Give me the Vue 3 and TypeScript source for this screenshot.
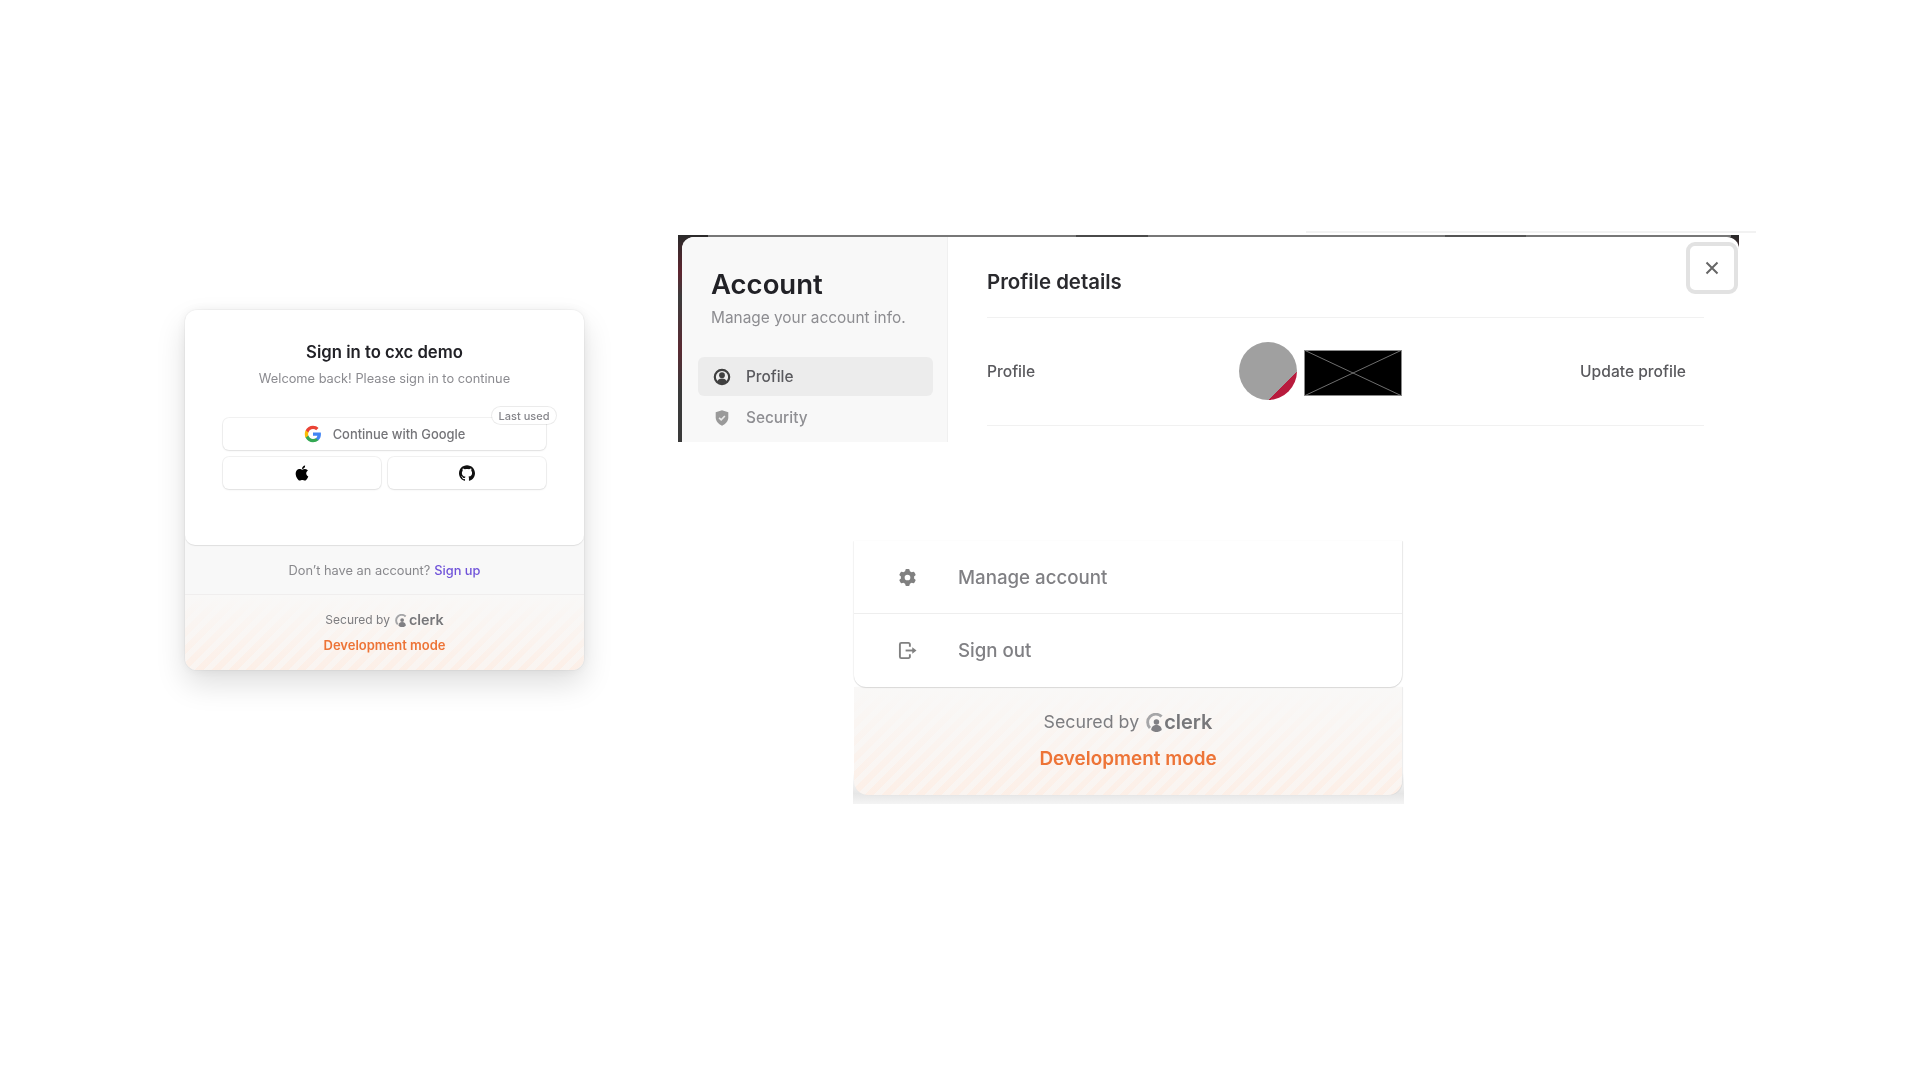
<template>
  <main class="page">
    <section class="signin">
      <div class="signin-body">
        <h1 class="signin-title">Sign in to cxc demo</h1>
        <p class="signin-sub">Welcome back! Please sign in to continue</p>
        <div class="providers">
          <button class="provider provider-wide">
            <svg class="google" viewBox="0 0 24 24" aria-hidden="true">
              <path fill="#4285F4" d="M22.56 12.25c0-.78-.07-1.53-.2-2.25H12v4.26h5.92c-.26 1.37-1.04 2.53-2.21 3.31v2.77h3.57c2.08-1.92 3.28-4.74 3.28-8.09z" />
              <path fill="#34A853" d="M12 23c2.97 0 5.46-.98 7.28-2.66l-3.57-2.77c-.98.66-2.23 1.06-3.71 1.06-2.86 0-5.29-1.93-6.16-4.53H2.18v2.84C3.99 20.53 7.7 23 12 23z" />
              <path fill="#FBBC05" d="M5.84 14.09c-.22-.66-.35-1.36-.35-2.09s.13-1.43.35-2.09V7.07H2.18C1.43 8.55 1 10.22 1 12s.43 3.45 1.18 4.93l2.85-2.22.81-.62z" />
              <path fill="#EA4335" d="M12 5.38c1.62 0 3.06.56 4.21 1.64l3.15-3.15C17.45 2.09 14.97 1 12 1 7.7 1 3.99 3.47 2.18 7.07l3.66 2.84c.87-2.6 3.3-4.53 6.16-4.53z" />
            </svg>
            <span>Continue with Google</span>
            <span class="last-used">Last used</span>
          </button>
          <button class="provider" aria-label="Apple">
            <svg class="apple" viewBox="0 0 24 24" aria-hidden="true">
              <path fill="#000" d="M17.05 20.28c-.98.95-2.05.8-3.08.35-1.09-.46-2.09-.48-3.24 0-1.44.62-2.2.44-3.06-.35C2.79 15.25 3.51 7.59 9.05 7.31c1.35.07 2.29.74 3.08.8 1.18-.24 2.31-.93 3.57-.84 1.51.12 2.65.72 3.4 1.8-3.12 1.87-2.38 5.98.48 7.13-.57 1.5-1.31 2.99-2.54 4.09zM12.03 7.25c-.15-2.23 1.66-4.07 3.74-4.25.29 2.58-2.34 4.5-3.74 4.25z" />
            </svg>
          </button>
          <button class="provider" aria-label="GitHub">
            <svg class="brand" viewBox="0 0 24 24" aria-hidden="true">
              <path fill="#111" d="M12 .297c-6.63 0-12 5.373-12 12 0 5.303 3.438 9.8 8.205 11.385.6.113.82-.258.82-.577 0-.285-.01-1.04-.015-2.04-3.338.724-4.042-1.61-4.042-1.61C4.422 18.07 3.633 17.7 3.633 17.7c-1.087-.744.084-.729.084-.729 1.205.084 1.838 1.236 1.838 1.236 1.07 1.835 2.809 1.305 3.495.998.108-.776.417-1.305.76-1.605-2.665-.3-5.466-1.332-5.466-5.93 0-1.31.465-2.38 1.235-3.22-.135-.303-.54-1.523.105-3.176 0 0 1.005-.322 3.3 1.23.96-.267 1.98-.399 3-.405 1.02.006 2.04.138 3 .405 2.28-1.552 3.285-1.23 3.285-1.23.645 1.653.24 2.873.12 3.176.765.84 1.23 1.91 1.23 3.22 0 4.61-2.805 5.625-5.475 5.92.42.36.81 1.096.81 2.22 0 1.606-.015 2.896-.015 3.286 0 .315.21.69.825.57C20.565 22.092 24 17.592 24 12.297c0-6.627-5.373-12-12-12" />
            </svg>
          </button>
        </div>
      </div>
      <div class="signup-row">
        Don’t have an account? <a class="signup-link">Sign up</a>
      </div>
      <footer class="dev-footer small">
        <div class="secured">
          <span>Secured by</span>
          <svg class="clerk-mark" viewBox="0 0 20 20" aria-hidden="true">
            <path class="clerk-arc" d="M16.4 3.8A8.4 8.4 0 0 0 4.2 15.9" />
            <circle cx="11" cy="9.4" r="2.9" />
            <path d="M5.4 18a8.6 8.6 0 0 0 11.2 0 5.4 5.4 0 0 0-11.2 0z" />
          </svg>
          <span class="clerk-word">clerk</span>
        </div>
        <div class="dev-mode">Development mode</div>
      </footer>
    </section>

    <div class="right">
      <section class="account">
        <div class="account-inner">
          <aside class="side">
            <h2 class="side-title">Account</h2>
            <p class="side-sub">Manage your account info.</p>
            <nav class="side-nav">
              <a class="side-item active">
                <svg class="side-icon" viewBox="0 0 20 20" aria-hidden="true">
                  <circle cx="10" cy="10" r="8" fill="none" stroke="#3f3f3f" stroke-width="2.4" />
                  <circle cx="10" cy="8" r="3.2" fill="#3f3f3f" />
                  <path fill="#3f3f3f" d="M4.4 15.4a6 6 0 0 1 11.2 0L10 18z" />
                </svg>
                <span>Profile</span>
              </a>
              <a class="side-item">
                <svg class="side-icon" viewBox="0 0 20 20" aria-hidden="true">
                  <path fill="#9a9a9a" d="M10 1.5 3 3.6v5.6c0 4.4 2.9 7.6 7 9.3 4.1-1.7 7-4.9 7-9.3V3.6z" />
                  <path fill="none" stroke="#e9e9e9" stroke-width="1.8" d="m6.8 9.8 2.3 2.3 4.1-4.4" />
                </svg>
                <span>Security</span>
              </a>
            </nav>
          </aside>
          <div class="details">
            <h2 class="details-title">Profile details</h2>
            <div class="details-row">
              <span class="row-label">Profile</span>
              <div class="avatar"></div>
              <svg class="broken" viewBox="0 0 98 46" preserveAspectRatio="none" aria-hidden="true">
                <rect x=".5" y=".5" width="97" height="45" fill="#000" stroke="#8a8a8a" />
                <path d="M0 0 98 46M98 0 0 46" stroke="#8a8a8a" stroke-width=".8" />
              </svg>
              <a class="update">Update profile</a>
            </div>
          </div>
        </div>
        <button class="close" aria-label="Close">
          <svg viewBox="0 0 16 16" aria-hidden="true">
            <path d="m2.5 2.5 11 11m0-11-11 11" fill="none" stroke="#666" stroke-width="2" />
          </svg>
        </button>
      </section>

      <section class="menu">
        <div class="menu-rows">
          <a class="menu-row">
            <svg class="menu-icon" viewBox="0 0 20 20" aria-hidden="true">
              <path fill="#808080" fill-rule="evenodd" d="M7.84 1.804A1 1 0 0 1 8.82 1h2.36a1 1 0 0 1 .98.804l.331 1.652a6.993 6.993 0 0 1 1.929 1.115l1.598-.54a1 1 0 0 1 1.186.447l1.18 2.044a1 1 0 0 1-.205 1.251l-1.267 1.113a7.047 7.047 0 0 1 0 2.228l1.267 1.113a1 1 0 0 1 .206 1.25l-1.18 2.045a1 1 0 0 1-1.187.447l-1.598-.54a6.993 6.993 0 0 1-1.929 1.115l-.33 1.652a1 1 0 0 1-.98.804H8.82a1 1 0 0 1-.98-.804l-.331-1.652a6.993 6.993 0 0 1-1.929-1.115l-1.598.54a1 1 0 0 1-1.186-.447l-1.18-2.044a1 1 0 0 1 .205-1.251l1.267-1.114a7.05 7.05 0 0 1 0-2.227L1.821 7.773a1 1 0 0 1-.206-1.25l1.18-2.045a1 1 0 0 1 1.187-.447l1.598.54A6.992 6.992 0 0 1 7.51 3.456l.33-1.652ZM10 13a3 3 0 1 0 0-6 3 3 0 0 0 0 6Z" />
            </svg>
            <span>Manage account</span>
          </a>
          <a class="menu-row">
            <svg class="menu-icon" viewBox="0 0 20 20" aria-hidden="true">
              <path fill="none" stroke="#808080" stroke-width="2" d="M12.5 6V3.5a1.5 1.5 0 0 0-1.5-1.5H3.5A1.5 1.5 0 0 0 2 3.5v13A1.5 1.5 0 0 0 3.5 18H11a1.5 1.5 0 0 0 1.5-1.5V14" />
              <path fill="none" stroke="#808080" stroke-width="2" d="M8 10h8" />
              <path fill="#808080" d="m15 6.5 4.5 3.5-4.5 3.5z" />
            </svg>
            <span>Sign out</span>
          </a>
        </div>
        <footer class="dev-footer large">
          <div class="secured">
            <span>Secured by</span>
            <svg class="clerk-mark" viewBox="0 0 20 20" aria-hidden="true">
              <path class="clerk-arc" d="M16.4 3.8A8.4 8.4 0 0 0 4.2 15.9" />
              <circle cx="11" cy="9.4" r="2.9" />
              <path d="M5.4 18a8.6 8.6 0 0 0 11.2 0 5.4 5.4 0 0 0-11.2 0z" />
            </svg>
            <span class="clerk-word">clerk</span>
          </div>
          <div class="dev-mode">Development mode</div>
        </footer>
      </section>
    </div>
  </main>
</template>

<script setup lang="ts">
</script>

<style>
html,
body {
  background: #fff;
}
</style>

<style scoped>
.page {
  box-sizing: border-box;
  width: 1920px;
  height: 1080px;
  padding: 235px 0 0 185px;
  display: flex;
  align-items: flex-start;
  background: #fff;
  overflow: hidden;
  font-family: Inter, "Liberation Sans", sans-serif;
}

/* sign in card */
.signin {
  margin-top: 75px;
  width: 399px;
  height: 360px;
  flex: none;
  display: flex;
  flex-direction: column;
  border-radius: 12px;
  overflow: hidden;
  background: #f8f8f8;
  box-shadow: 0 14px 30px rgba(0, 0, 0, 0.13), 0 0 14px rgba(0, 0, 0, 0.06), 0 0 2px rgba(0, 0, 0, 0.12);
  filter: blur(0.4px);
}
.signin-body {
  height: 235px;
  flex: none;
  box-sizing: border-box;
  padding: 32px 38px 0;
  background: #fff;
  border-radius: 0 0 10px 10px;
  box-shadow: 0 1px 1px rgba(0, 0, 0, 0.1);
  text-align: center;
}
.signin-title {
  margin: 0;
  font-size: 16.7px;
  line-height: 20px;
  font-weight: 600;
  color: #212126;
}
.signin-sub {
  margin: 8px 0 0;
  font-size: 12.8px;
  line-height: 18px;
  color: #8b8b90;
}
.providers {
  margin-top: 30px;
  width: 323px;
  display: grid;
  grid-template-columns: 1fr 1fr;
  gap: 7px;
}
.provider {
  position: relative;
  height: 32px;
  display: flex;
  align-items: center;
  justify-content: center;
  gap: 11px;
  padding: 0;
  background: #fff;
  border: 0;
  border-radius: 6px;
  box-shadow: 0 0 0 1px rgba(0, 0, 0, 0.05), 0 1px 2px rgba(0, 0, 0, 0.08);
  font: 500 12.9px Inter, "Liberation Sans", sans-serif;
  color: #747478;
}
.provider-wide {
  grid-column: 1 / 3;
}
.google {
  width: 18px;
  height: 18px;
}
.brand {
  width: 16px;
  height: 16px;
}
.apple {
  width: 20px;
  height: 20px;
}
.last-used {
  position: absolute;
  top: -11px;
  right: -10px;
  height: 17px;
  width: 64px;
  display: flex;
  align-items: center;
  justify-content: center;
  box-sizing: border-box;
  background: #fff;
  border-radius: 9px;
  box-shadow: 0 0 0 1px rgba(0, 0, 0, 0.08);
  font-size: 11px;
  font-weight: 500;
  color: #85858a;
}
.signup-row {
  height: 50px;
  flex: none;
  display: flex;
  align-items: center;
  justify-content: center;
  gap: 4px;
  padding-top: 1px;
  font-size: 12.8px;
  color: #88888c;
  border-bottom: 1px solid #f0eeee;
  box-sizing: border-box;
}
.signup-link {
  font-weight: 500;
  color: #6f52d9;
}

/* shared footer */
.dev-footer {
  flex: 1;
  display: flex;
  flex-direction: column;
  align-items: center;
  background:
    linear-gradient(180deg, #f9f8f7 0%, rgba(249, 248, 247, 0.55) 55%, rgba(249, 248, 247, 0.1) 100%),
    repeating-linear-gradient(135deg, #fdeee5 0 6px, #faf4f0 6px 12px);
}
.secured {
  display: flex;
  align-items: center;
  color: #7d7d80;
}
.clerk-mark {
  fill: #808084;
}
.clerk-arc {
  fill: none;
  stroke: #a6a6a8;
  stroke-width: 3;
}
.clerk-word {
  font-weight: 600;
  color: #77777a;
}
.dev-mode {
  font-weight: 600;
  color: #ed7437;
}
.small {
  padding-top: 16px;
}
.small .secured {
  font-size: 12px;
  line-height: 18px;
}
.small .clerk-mark {
  width: 13px;
  height: 13px;
  margin-left: 5px;
}
.small .clerk-word {
  font-size: 14.4px;
  margin-left: 1px;
}
.small .dev-mode {
  margin-top: 8px;
  font-size: 13px;
  line-height: 17px;
}

/* account panel */
.right {
  margin-left: 94px;
  width: 1061px;
  flex: none;
}
.account {
  position: relative;
  height: 207px;
  padding: 2px 0 0 4px;
  box-sizing: border-box;
  background: linear-gradient(180deg, #2a2a2a 0%, #5e2530 18%, #3c3c3c 30%, #5a2a33 55%, #3a3a3a 75%, #3a3a3a 100%);
  filter: blur(0.5px);
}
.account::before {
  content: "";
  position: absolute;
  top: -4px;
  left: 628px;
  width: 450px;
  height: 2px;
  background: #f2f2f2;
}
.account::after {
  content: "";
  position: absolute;
  top: 0;
  left: 30px;
  right: 8px;
  height: 2px;
  background: linear-gradient(90deg, #777 0 36%, #4a4a4a 36% 43%, #777 43% 72%, #555 72% 80%, #777 80% 100%);
}
.account-inner {
  height: 100%;
  display: flex;
  background: #fff;
  border-radius: 12px 12px 0 0;
  overflow: hidden;
}
.side {
  width: 266px;
  flex: none;
  box-sizing: border-box;
  padding: 28px 14px 0 16px;
  background: #f8f8f8;
  border-right: 1px solid #f0f0f0;
}
.side-title {
  margin: 0 0 0 13px;
  font-size: 27.5px;
  line-height: 38px;
  font-weight: 600;
  color: #212126;
}
.side-sub {
  margin: 5px 0 0 13px;
  font-size: 15.4px;
  line-height: 20px;
  color: #8d8d91;
}
.side-nav {
  margin-top: 29px;
  display: flex;
  flex-direction: column;
  gap: 2px;
}
.side-item {
  height: 39px;
  display: flex;
  align-items: center;
  gap: 15px;
  padding-left: 15px;
  border-radius: 6px;
  font-size: 15.4px;
  font-weight: 500;
  color: #8e8e92;
}
.side-item.active {
  background: #ececec;
  color: #5a5a5e;
}
.side-icon {
  width: 18px;
  height: 18px;
}
.details {
  flex: 1;
  box-sizing: border-box;
  padding: 28px 35px 0 39px;
}
.details-title {
  margin: 0;
  height: 52px;
  font-size: 20.4px;
  line-height: 34px;
  font-weight: 600;
  color: #2a2a2e;
  border-bottom: 1px solid #f1f1f1;
}
.details-row {
  height: 107px;
  display: flex;
  align-items: center;
  border-bottom: 1px solid #f1f1f1;
  font-size: 15.6px;
  font-weight: 500;
  color: #59595d;
}
.row-label {
  width: 252px;
  flex: none;
}
.avatar {
  width: 58px;
  height: 58px;
  flex: none;
  border-radius: 50%;
  background: linear-gradient(135deg, #a0a0a0 0 75.5%, #b81b3d 75.5% 100%);
  margin-top: -2px;
}
.broken {
  width: 98px;
  height: 46px;
  flex: none;
  margin: 2px 0 0 7px;
}
.update {
  margin: 0 18px 0 auto;
}
.close {
  position: absolute;
  top: 7px;
  right: 1px;
  width: 52px;
  height: 52px;
  display: flex;
  align-items: center;
  justify-content: center;
  padding: 0;
  background: #fff;
  border: 4px solid #e2e2e2;
  border-radius: 9px;
  box-sizing: border-box;
}
.close svg {
  width: 16px;
  height: 16px;
}

/* user menu */
.menu {
  margin: 99px 0 0 175px;
  width: 551px;
  height: 263px;
  box-sizing: border-box;
  padding: 0 2px 9px 1px;
  display: flex;
  flex-direction: column;
  background: linear-gradient(180deg, #fff 0 88%, #e6e6e6 96%, #f4f4f4 100%);
  filter: blur(0.7px);
}
.menu-rows {
  height: 146px;
  flex: none;
  background: #fff;
  border-radius: 0 0 12px 12px;
  box-shadow: 0 1px 1px rgba(0, 0, 0, 0.12), 1px 0 1px rgba(0, 0, 0, 0.08), -1px 0 1px rgba(0, 0, 0, 0.04);
  position: relative;
  z-index: 1;
}
.menu-row {
  height: 72px;
  box-sizing: border-box;
  display: flex;
  align-items: center;
  padding-left: 44px;
  font-size: 18.7px;
  font-weight: 500;
  color: #808084;
}
.menu-row + .menu-row {
  border-top: 1px solid #eeeeee;
  height: 74px;
}
.menu-icon {
  width: 19px;
  height: 19px;
  margin-right: 41px;
}
.menu .dev-footer {
  border-radius: 0 0 14px 14px;
  box-shadow: 1px 0 1px rgba(0, 0, 0, 0.08);
}
.large {
  padding-top: 23px;
}
.large .secured {
  font-size: 17.8px;
  line-height: 24px;
}
.large .clerk-mark {
  width: 19px;
  height: 19px;
  margin-left: 7px;
}
.large .clerk-word {
  font-size: 20px;
  margin-left: -1px;
}
.large .dev-mode {
  margin-top: 13px;
  font-size: 18.9px;
  line-height: 24px;
}
</style>
